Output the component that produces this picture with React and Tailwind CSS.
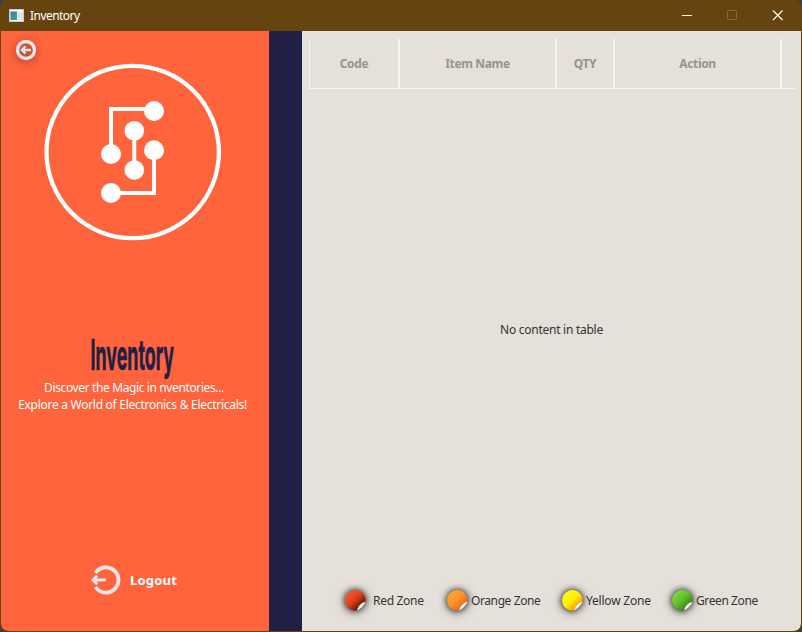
import React from "react";

const ZONES = [
  { label: "Red Zone", from: "#fa5a28", to: "#5e0404", mid: "#d8401c", box: "w-[102px]", gap: "ml-[7px]", text: "tracking-[-0.3px]" },
  { label: "Orange Zone", from: "#ffa92c", to: "#e85a18", mid: "#fb9228", box: "w-[115px]", gap: "ml-[3px]", text: "tracking-[-0.4px]" },
  { label: "Yellow Zone", from: "#fff81a", to: "#ff8a00", mid: "#fff000", box: "w-[110px]", gap: "ml-[3px]", text: "tracking-[-0.2px]" },
  { label: "Green Zone", from: "#7fdc3c", to: "#2f7a10", mid: "#60bc2c", box: "w-[100px]", gap: "ml-[3px]", text: "tracking-[-0.4px]" },
];

const COLUMNS = [
  { label: "Code", cell: "w-[90px] border-r-2" },
  { label: "Item Name", cell: "w-[157px] border-r-2" },
  { label: "QTY", cell: "w-[58px] border-r-2" },
  { label: "Action", cell: "w-[167px] border-r-2" },
];

function Sticker({ zone, id }) {
  return (
    <svg width="21" height="21" viewBox="0 0 21 21" className="shrink-0 overflow-visible [filter:drop-shadow(0_0_3px_rgba(0,0,0,0.75))_drop-shadow(0_1px_5px_rgba(0,0,0,0.45))]">
      <defs>
        <linearGradient id={id} x1="0.15" y1="0.1" x2="0.85" y2="0.85">
          <stop offset="0" stopColor={zone.from} />
          <stop offset="0.5" stopColor={zone.mid} />
          <stop offset="1" stopColor={zone.to} />
        </linearGradient>
      </defs>
      <path d="M20.3 12.3A10.2 10.2 0 1 0 12 20.3Q14 14 20.3 12.3Z" fill={`url(#${id})`} />
      <path d="M20.4 11.8Q18.6 17 12 20.4Q13.5 14 20.4 11.8Z" fill="#fbf8f5" />
    </svg>
  );
}

function TitleBar() {
  return (
    <header className="flex h-[31px] shrink-0 items-center bg-[#664410] text-white">
      <svg width="15" height="13" viewBox="0 0 15 13" className="ml-[8px]">
        <defs>
          <linearGradient id="app" x1="0" y1="0" x2="1" y2="1">
            <stop offset="0" stopColor="#3c78ae" />
            <stop offset="1" stopColor="#46a877" />
          </linearGradient>
        </defs>
        <rect x="0.5" y="0.5" width="14" height="12" fill="#f7f7f7" stroke="#c9c9c9" />
        <rect x="1.5" y="2.5" width="6.5" height="8.5" fill="url(#app)" />
        <rect x="9" y="3" width="2" height="8" fill="#d5dce0" />
        <rect x="12" y="3" width="1.5" height="8" fill="#d5dce0" />
      </svg>
      <span className="ml-[6px] text-[12px] leading-4 tracking-[-0.55px]">Inventory</span>
      <div className="-mr-px ml-auto flex h-full">
        <svg width="46" height="31" viewBox="0 0 46 31">
          <path d="M18 15.5H28" stroke="#fff" />
        </svg>
        <svg width="46" height="31" viewBox="0 0 46 31">
          <rect x="17.5" y="10.5" width="9" height="9" rx="1" fill="none" stroke="#8b6a35" />
        </svg>
        <svg width="46" height="31" viewBox="0 0 46 31">
          <path d="M17 10.5L26.5 20M26.5 10.5L17 20" stroke="#fff" strokeWidth="1.1" />
        </svg>
      </div>
    </header>
  );
}

function Sidebar() {
  return (
    <aside className="flex w-[268px] shrink-0 flex-col bg-[#ff643d] text-white">
      <svg width="22" height="22" viewBox="0 0 22 22" className="ml-[14px] mt-[8px] shrink-0 overflow-visible drop-shadow-[0_2px_4px_rgba(0,0,0,0.4)]">
        <circle cx="11" cy="11" r="8.5" fill="none" stroke="#eae4e8" strokeWidth="3.4" />
        <path d="M16 11H7.5M10.5 7.4L6.9 11L10.5 14.6" fill="none" stroke="#eae4e8" strokeWidth="2.3" />
      </svg>
      <svg width="178" height="178" viewBox="0 0 178 178" className="ml-[43px] mt-[2px] shrink-0">
        <circle cx="88.7" cy="89" r="86.2" fill="none" stroke="#fff" strokeWidth="4.3" />
        <g fill="none" stroke="#fff" strokeWidth="4">
          <path d="M110 46H67V91" />
          <path d="M90.3 68V107" />
          <path d="M110 87V130H67" />
        </g>
        <g fill="#fff">
          <circle cx="110" cy="48" r="10" />
          <circle cx="67" cy="91" r="10" />
          <circle cx="90.3" cy="67.7" r="9.8" />
          <circle cx="90.3" cy="107" r="9.8" />
          <circle cx="110" cy="87.3" r="10" />
          <circle cx="67" cy="130" r="10" />
        </g>
      </svg>
      <h1 className="mt-[90px] flex h-[48px] items-center justify-center font-['Inter',sans-serif] text-[42px] font-bold leading-[48px] text-[#211f45]">
        <span className="inline-block origin-center translate-x-[-3px] scale-x-[0.425] whitespace-nowrap [-webkit-text-stroke:0.6px_#211f45]">Inventory</span>
      </h1>
      <p className="flex w-[263px] flex-col items-center whitespace-nowrap text-[12px] leading-[17px]">
        <span className="ml-[3px] tracking-[-0.38px]">Discover the Magic in nventories...</span>
        <span className="tracking-[-0.28px]">Explore a World of Electronics &amp; Electricals!</span>
      </p>
      <div className="ml-[90px] mt-auto mb-[36px] flex h-[30px] items-center">
        <svg width="30" height="30" viewBox="0 0 30 30">
          <path d="M4.4 8A12.6 12.6 0 1 1 4.4 22" fill="none" stroke="#eae4e8" strokeWidth="3.8" />
          <path d="M15 15H3M6.3 10.8L2 15L6.3 19.2" fill="none" stroke="#eae4e8" strokeWidth="3" />
        </svg>
        <span className="ml-[9px] mt-px text-[13px] font-bold tracking-[0.2px]">Logout</span>
      </div>
    </aside>
  );
}

export default function App() {
  return (
    <div className="h-[632px] w-[802px] overflow-hidden bg-[#33414a] font-['Noto_Sans',sans-serif]">
      <div className="flex h-full flex-col overflow-hidden rounded-[8px] border-x border-b border-[#664410] bg-[#664410]">
        <TitleBar />
        <div className="flex min-h-0 flex-1 overflow-hidden rounded-b-[7px]">
          <Sidebar />
          <div className="w-[33px] shrink-0 bg-[#211f45]" />
          <main className="flex flex-1 flex-col bg-[#e5e0da] text-[12px] text-[#333]">
            <div className="ml-[7px] mr-[6px] mt-[8px] flex h-[50px] border-b border-l border-[#f4f4f4]">
              {COLUMNS.map((c) => (
                <div key={c.label} className={`${c.cell} flex shrink-0 items-center justify-center border-[#f4f4f4] font-bold tracking-[-0.35px] text-[#949494]`}>
                  {c.label}
                </div>
              ))}
            </div>
            <div className="flex flex-1 items-center justify-center pb-[19px] tracking-[-0.26px]">No content in table</div>
            <div className="mb-[20px] ml-[43px] flex h-[21px] items-center">
              {ZONES.map((z, i) => (
                <div key={z.label} className={`${z.box} flex shrink-0 items-center whitespace-nowrap`}>
                  <Sticker zone={z} id={`zone${i}`} />
                  <span className={`${z.gap} ${z.text}`}>{z.label}</span>
                </div>
              ))}
            </div>
          </main>
        </div>
      </div>
    </div>
  );
}
